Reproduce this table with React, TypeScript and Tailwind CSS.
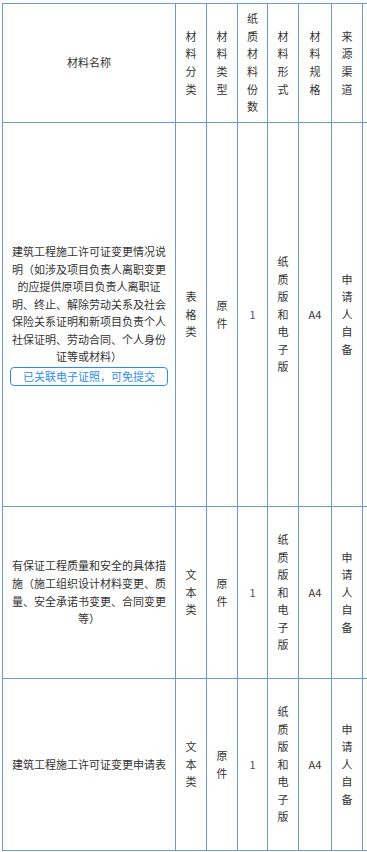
import React from "react";

type Row = {
  name: string;
  linked?: boolean;
  category: string;
  kind: string;
  copies: string;
  form: string;
  spec: string;
  source: string;
  height: string;
};

const rows: Row[] = [
  {
    name: "建筑工程施工许可证变更情况说明（如涉及项目负责人离职变更的应提供原项目负责人离职证明、终止、解除劳动关系及社会保险关系证明和新项目负责个人社保证明、劳动合同、个人身份证等或材料）",
    linked: true,
    category: "表格类",
    kind: "原件",
    copies: "1",
    form: "纸质版和电子版",
    spec: "A4",
    source: "申请人自备",
    height: "h-[384px]",
  },
  {
    name: "有保证工程质量和安全的具体措施（施工组织设计材料变更、质量、安全承诺书变更、合同变更等）",
    category: "文本类",
    kind: "原件",
    copies: "1",
    form: "纸质版和电子版",
    spec: "A4",
    source: "申请人自备",
    height: "h-[172px]",
  },
  {
    name: "建筑工程施工许可证变更申请表",
    category: "文本类",
    kind: "原件",
    copies: "1",
    form: "纸质版和电子版",
    spec: "A4",
    source: "申请人自备",
    height: "h-[172px]",
  },
];

const headers = ["材料分类", "材料类型", "纸质材料份数", "材料形式", "材料规格", "来源渠道"];

const cell = "border border-[#6b9bd1] px-[6px] text-center align-middle";

const App = () => (
  <div
    className="w-[367px] h-[852px] overflow-hidden bg-white pl-[2px] pt-[3px] text-[11px] leading-[17.6px] text-[#333]"
    style={{ fontFamily: '"Noto Sans CJK SC", "Microsoft YaHei", sans-serif' }}
  >
    <table className="table-fixed border-collapse w-[420px]">
      <colgroup>
        <col className="w-[173px]" />
        <col className="w-[31px]" />
        <col className="w-[31px]" />
        <col className="w-[30px]" />
        <col className="w-[31px]" />
        <col className="w-[33px]" />
        <col className="w-[31px]" />
        <col className="w-[60px]" />
      </colgroup>
      <thead>
        <tr className="h-[119px]">
          <th className={`${cell} font-normal`}>材料名称</th>
          {headers.map((h) => (
            <th key={h} className={`${cell} font-normal break-all`}>
              {h}
            </th>
          ))}
          <th className={cell}></th>
        </tr>
      </thead>
      <tbody>
        {rows.map((r) => (
          <tr key={r.name} className={r.height}>
            <td className={`${cell} !px-[5px]`}>
              <div>{r.name}</div>
              {r.linked && (
                <div className="mx-[2px] mt-[1px] h-[19px] rounded-[4px] border border-[#2d8cf0] text-[#2d8cf0] leading-[17px]">
                  已关联电子证照，可免提交
                </div>
              )}
            </td>
            <td className={`${cell} break-all`}>{r.category}</td>
            <td className={`${cell} break-all`}>{r.kind}</td>
            <td className={`${cell} text-[#6a3d8a]`}>{r.copies}</td>
            <td className={`${cell} break-all`}>{r.form}</td>
            <td className={cell}>{r.spec}</td>
            <td className={`${cell} break-all`}>{r.source}</td>
            <td className={cell}></td>
          </tr>
        ))}
      </tbody>
    </table>
  </div>
);

export default App;
